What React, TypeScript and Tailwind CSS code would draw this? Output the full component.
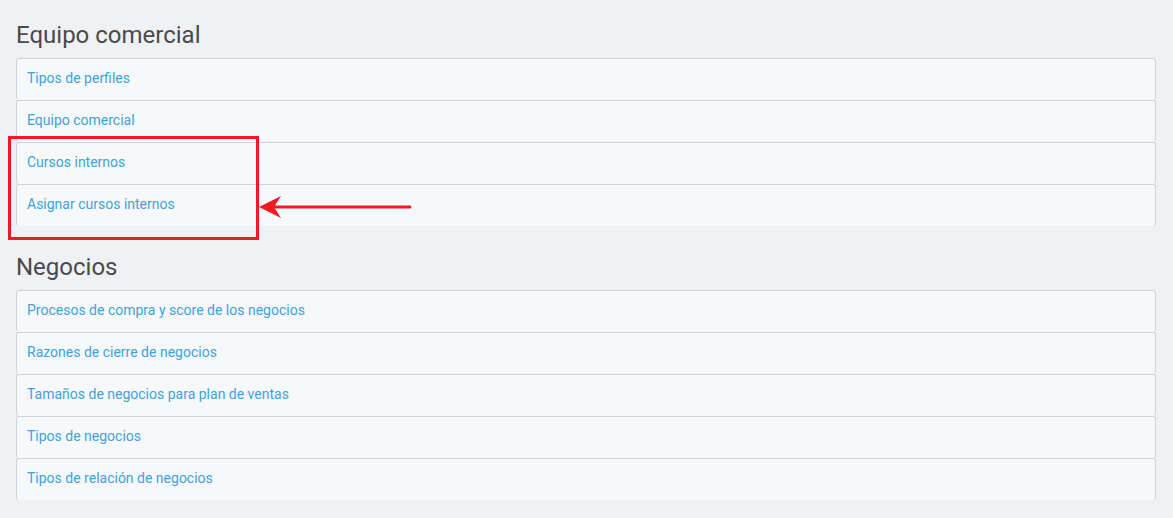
import React from "react";

const sections: { title: string; items: string[] }[] = [
  {
    title: "Equipo comercial",
    items: ["Tipos de perfiles", "Equipo comercial", "Cursos internos", "Asignar cursos internos"],
  },
  {
    title: "Negocios",
    items: [
      "Procesos de compra y score de los negocios",
      "Razones de cierre de negocios",
      "Tamaños de negocios para plan de ventas",
      "Tipos de negocios",
      "Tipos de relación de negocios",
    ],
  },
];

export default function App() {
  return (
    <div
      className="relative min-h-[518px] w-full bg-[#f0f1f4] pl-4 pr-[17px]"
      style={{ fontFamily: "Roboto, 'Noto Sans', sans-serif" }}
    >
      <div className="flex flex-col gap-[6px]">
        {sections.map((s) => (
          <section key={s.title} className="flex flex-col">
            <h2 className="pt-[21px] mb-[9px] text-[24px] leading-[28px] font-normal text-[#4a4a4a]">
              {s.title}
            </h2>
            <ul className="flex flex-col">
              {s.items.map((it) => (
                <li
                  key={it}
                  className="h-[42px] rounded-[3px] border-x border-t border-[#cfd2d6] bg-[#f7f8fa] px-[10px] pt-[9px] text-[14px] leading-[20px] text-[#3ea3d8]"
                >
                  {it}
                </li>
              ))}
            </ul>
          </section>
        ))}
      </div>

      <div className="pointer-events-none absolute left-[8px] top-[136px] h-[104px] w-[251px] border-[3px] border-[#ed1c24]" />
      <svg
        className="pointer-events-none absolute left-0 top-0"
        width="1173"
        height="518"
        viewBox="0 0 1173 518"
      >
        <line x1="273" y1="207" x2="410" y2="207" stroke="#ed1c24" strokeWidth="3" strokeLinecap="round" />
        <polygon points="259,207 281,196 274,207 281,218" fill="#ed1c24" />
      </svg>
    </div>
  );
}
